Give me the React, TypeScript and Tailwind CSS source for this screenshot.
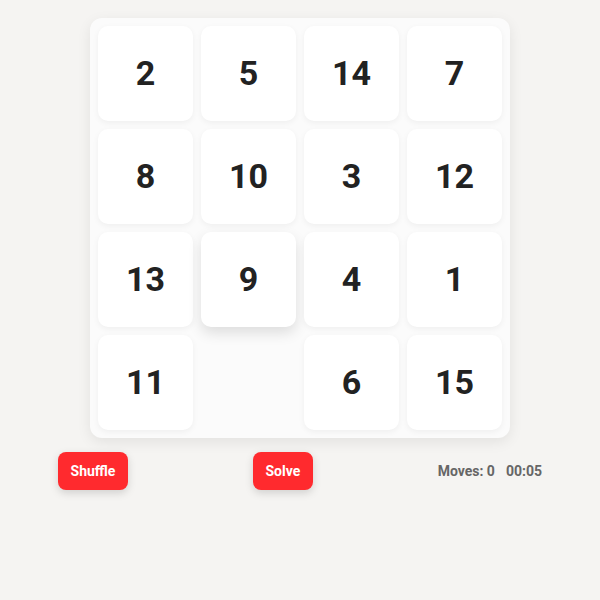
import { useState } from 'react';

const tiles = [2, 5, 14, 7, 8, 10, 3, 12, 13, 9, 4, 1, 11, 0, 6, 15];

export default function App() {
  const [board] = useState(tiles);
  const [moves] = useState(0);

  return (
    <div className="w-[600px] h-[600px] bg-[#f5f4f2] pt-[18px]" style={{ fontFamily: 'Roboto, sans-serif' }}>
      {/* Board */}
      <div className="mx-auto w-[420px] h-[420px] p-2 rounded-xl bg-[#fbfbfb] shadow-[0_4px_14px_rgba(0,0,0,0.08)] grid grid-cols-4 gap-2">
        {board.map((n, i) =>
          n === 0 ? (
            <div key={i} />
          ) : (
            <div
              key={i}
              className={`flex items-center justify-center rounded-[10px] bg-white text-[34px] font-bold text-[#222] ${
                n === 9 ? 'shadow-[0_6px_14px_rgba(0,0,0,0.12)]' : 'shadow-[0_2px_6px_rgba(0,0,0,0.05)]'
              }`}
            >
              {n}
            </div>
          )
        )}
      </div>

      {/* Controls */}
      <div className="mx-auto mt-[14px] w-[484px] flex items-center justify-between">
        <button className="h-[38px] w-[70px] rounded-lg bg-[#ff2a2e] text-white text-sm font-bold shadow-[0_3px_8px_rgba(0,0,0,0.15)]">
          Shuffle
        </button>
        <button className="h-[38px] w-[60px] rounded-lg bg-[#ff2a2e] text-white text-sm font-bold shadow-[0_3px_8px_rgba(0,0,0,0.15)]">
          Solve
        </button>
        <div className="flex gap-[11px] text-sm font-bold text-[#666]">
          <span>Moves: {moves}</span>
          <span>00:05</span>
        </div>
      </div>
    </div>
  );
}
